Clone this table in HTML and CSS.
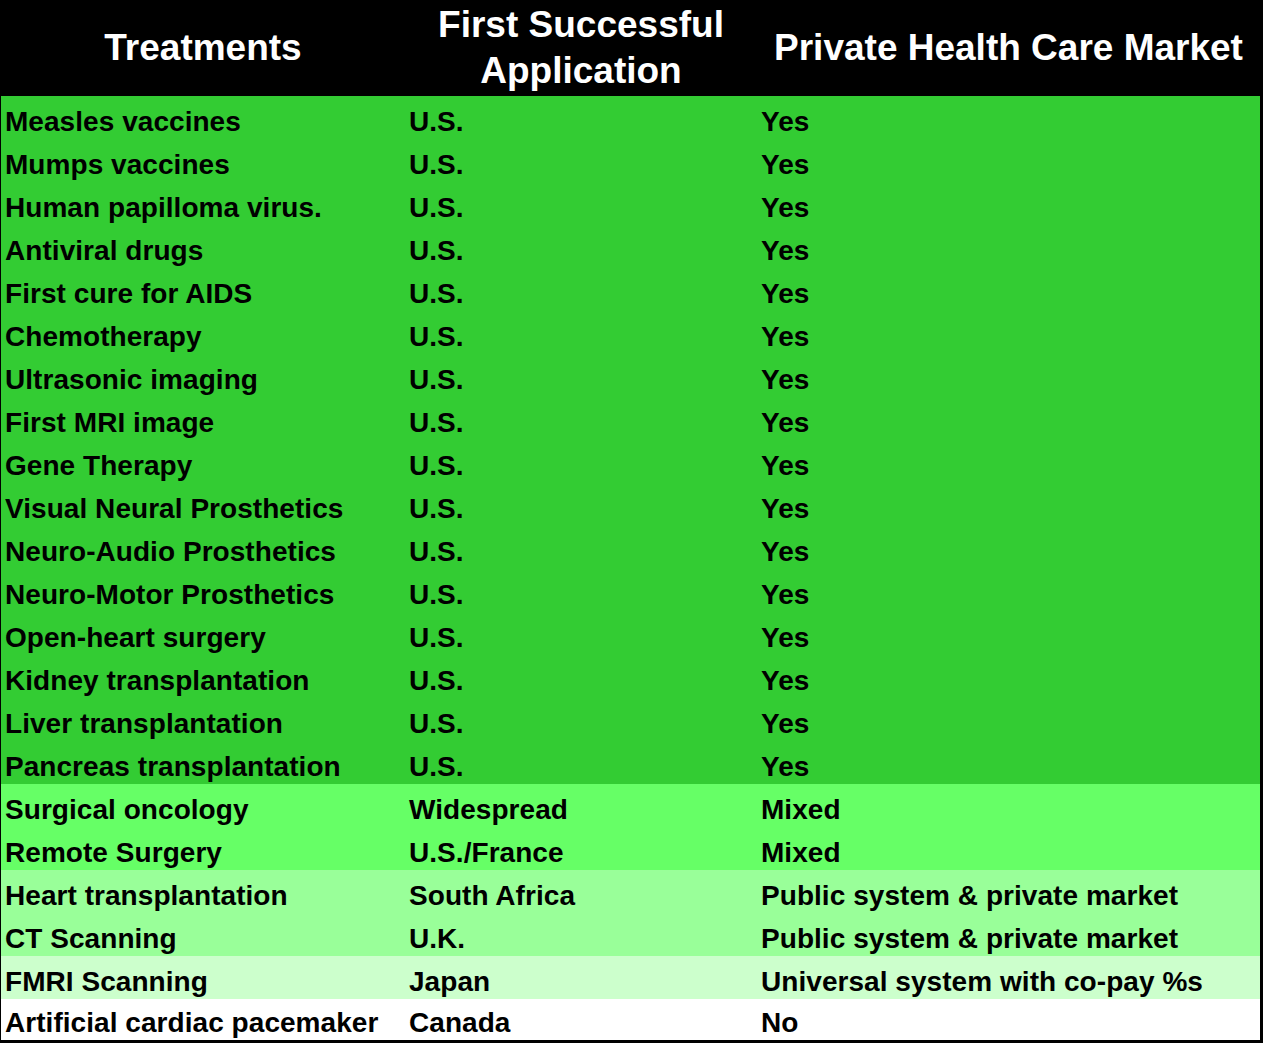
FILE: index.html
```html
<!DOCTYPE html>
<html lang="en">
<head>
<meta charset="utf-8">
<title>Treatments</title>
<link rel="stylesheet" href="styles.css">
</head>
<body>
<div class="sheet">
  <div class="row head">
    <div class="hcell">Treatments</div>
    <div class="hcell">First Successful<br>Application</div>
    <div class="hcell">Private Health Care Market</div>
  </div>
  <div class="row g1"><div class="cell">Measles vaccines</div><div class="cell">U.S.</div><div class="cell">Yes</div></div>
  <div class="row g1"><div class="cell">Mumps vaccines</div><div class="cell">U.S.</div><div class="cell">Yes</div></div>
  <div class="row g1"><div class="cell">Human papilloma virus.</div><div class="cell">U.S.</div><div class="cell">Yes</div></div>
  <div class="row g1"><div class="cell">Antiviral drugs</div><div class="cell">U.S.</div><div class="cell">Yes</div></div>
  <div class="row g1"><div class="cell">First cure for AIDS</div><div class="cell">U.S.</div><div class="cell">Yes</div></div>
  <div class="row g1"><div class="cell">Chemotherapy</div><div class="cell">U.S.</div><div class="cell">Yes</div></div>
  <div class="row g1"><div class="cell">Ultrasonic imaging</div><div class="cell">U.S.</div><div class="cell">Yes</div></div>
  <div class="row g1"><div class="cell">First MRI image</div><div class="cell">U.S.</div><div class="cell">Yes</div></div>
  <div class="row g1"><div class="cell">Gene Therapy</div><div class="cell">U.S.</div><div class="cell">Yes</div></div>
  <div class="row g1"><div class="cell">Visual Neural Prosthetics</div><div class="cell">U.S.</div><div class="cell">Yes</div></div>
  <div class="row g1"><div class="cell">Neuro-Audio Prosthetics</div><div class="cell">U.S.</div><div class="cell">Yes</div></div>
  <div class="row g1"><div class="cell">Neuro-Motor Prosthetics</div><div class="cell">U.S.</div><div class="cell">Yes</div></div>
  <div class="row g1"><div class="cell">Open-heart surgery</div><div class="cell">U.S.</div><div class="cell">Yes</div></div>
  <div class="row g1"><div class="cell">Kidney transplantation</div><div class="cell">U.S.</div><div class="cell">Yes</div></div>
  <div class="row g1"><div class="cell">Liver transplantation</div><div class="cell">U.S.</div><div class="cell">Yes</div></div>
  <div class="row g1"><div class="cell">Pancreas transplantation</div><div class="cell">U.S.</div><div class="cell">Yes</div></div>
  <div class="row g2"><div class="cell">Surgical oncology</div><div class="cell">Widespread</div><div class="cell">Mixed</div></div>
  <div class="row g2"><div class="cell">Remote Surgery</div><div class="cell">U.S./France</div><div class="cell">Mixed</div></div>
  <div class="row g3"><div class="cell">Heart transplantation</div><div class="cell">South Africa</div><div class="cell">Public system &amp; private market</div></div>
  <div class="row g3"><div class="cell">CT Scanning</div><div class="cell">U.K.</div><div class="cell">Public system &amp; private market</div></div>
  <div class="row g4"><div class="cell">FMRI Scanning</div><div class="cell">Japan</div><div class="cell">Universal system with co-pay %s</div></div>
  <div class="row g5 last"><div class="cell">Artificial cardiac pacemaker</div><div class="cell">Canada</div><div class="cell">No</div></div>
</div>
</body>
</html>
```
FILE: styles.css
```css
html, body {
  margin: 0;
  padding: 0;
  background: #000;
}

.sheet {
  width: 1263px;
  height: 1043px;
  box-sizing: border-box;
  padding: 0 3px 3px 1px;
  background: #000;
  font-family: "Liberation Sans", Arial, sans-serif;
  font-weight: bold;
  display: flex;
  flex-direction: column;
}

.row {
  display: grid;
  grid-template-columns: 404px 352px 1fr;
  height: 43px;
  flex: none;
}

.head {
  height: 96px;
  color: #fff;
  align-items: center;
}

.hcell {
  text-align: center;
  font-size: 37px;
  line-height: 46px;
  white-space: nowrap;
}

.cell {
  box-sizing: border-box;
  padding: 9px 0 0 4px;
  font-size: 28px;
  line-height: 34px;
  letter-spacing: 0.05px;
  color: #000;
  white-space: nowrap;
  overflow: hidden;
}

.g1 { background: #33cc33; }
.g2 { background: #66ff66; }
.g3 { background: #99ff99; }
.g4 { background: #ccffcc; }
.g5 { background: #ffffff; }

.last {
  height: 41px;
}

.last .cell {
  padding-top: 7px;
}
```
